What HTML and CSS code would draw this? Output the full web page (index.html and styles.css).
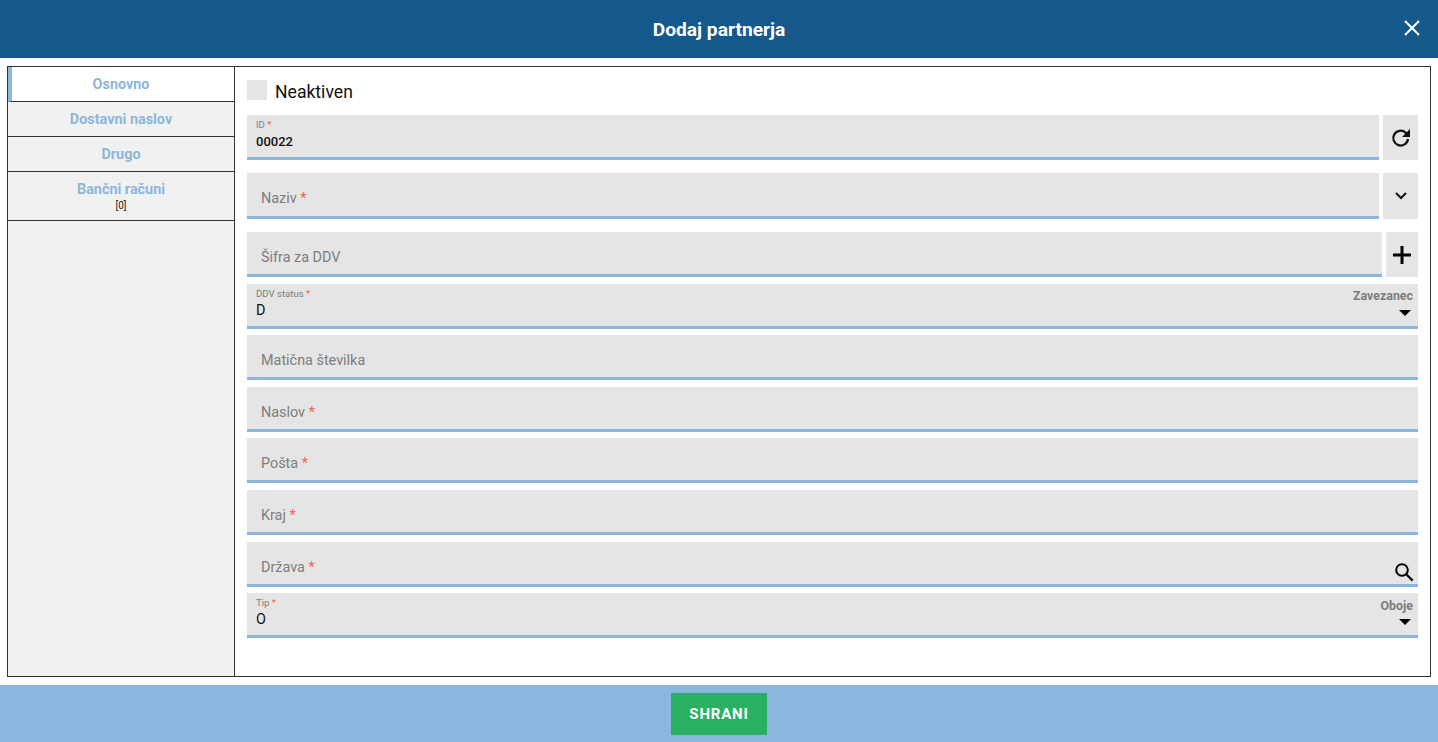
FILE: index.html
```html
<!DOCTYPE html>
<html lang="sl">
<head>
  <meta charset="UTF-8" />
  <title>Dodaj partnerja</title>
  <link rel="stylesheet" href="styles.css">
</head>
<body>
  <header class="glava">
    <h1>Dodaj partnerja</h1>
    <button class="zapri" aria-label="Zapri">
      <svg width="16" height="16" viewBox="0 0 16 16"><path d="M1 1L15 15M15 1L1 15" stroke="#fff" stroke-width="2" fill="none"/></svg>
    </button>
  </header>

  <main class="okvir">
    <nav class="zavihki">
      <a class="zavihek aktiven">Osnovno</a>
      <a class="zavihek">Dostavni naslov</a>
      <a class="zavihek">Drugo</a>
      <a class="zavihek zavihek-visok">Bančni računi<small>[0]</small></a>
    </nav>

    <form class="obrazec">
      <label class="potrditev"><span class="kvadrat"></span><span class="potrditev-tekst">Neaktiven</span></label>

      <div class="vrstica vrstica-id">
        <div class="polje polnjeno">
          <span class="oznaka">ID <i>*</i></span>
          <span class="vrednost krepko">00022</span>
        </div>
        <button type="button" class="gumb">
          <svg width="20" height="20" viewBox="0 0 20 20"><path d="M17 11A7.4 7.4 0 1 1 14.6 4.6L17 7" fill="none" stroke="#111" stroke-width="2.2"/><path d="M19 1V9H11Z" fill="#111"/></svg>
        </button>
      </div>

      <div class="vrstica vrstica-naziv">
        <div class="polje"><span class="naslov-polja">Naziv <i>*</i></span></div>
        <button type="button" class="gumb">
          <svg width="12" height="8" viewBox="0 0 12 8"><path d="M1 1L6 6L11 1" fill="none" stroke="#111" stroke-width="2"/></svg>
        </button>
      </div>

      <div class="vrstica vrstica-ddv">
        <div class="polje"><span class="naslov-polja">Šifra za DDV</span></div>
        <button type="button" class="gumb gumb-ozek">
          <svg width="18" height="18" viewBox="0 0 18 18"><path d="M9 0V18M0 9H18" stroke="#000" stroke-width="3"/></svg>
        </button>
      </div>

      <div class="polje polnjeno izbira">
        <span class="oznaka">DDV status <i>*</i></span>
        <span class="vrednost">D</span>
        <span class="opis">Zavezanec</span>
        <span class="puscica"></span>
      </div>

      <div class="polje"><span class="naslov-polja">Matična številka</span></div>
      <div class="polje"><span class="naslov-polja">Naslov <i>*</i></span></div>
      <div class="polje"><span class="naslov-polja">Pošta <i>*</i></span></div>
      <div class="polje"><span class="naslov-polja">Kraj <i>*</i></span></div>

      <div class="polje">
        <span class="naslov-polja">Država <i>*</i></span>
        <svg class="lupa" width="20" height="20" viewBox="0 0 20 20"><circle cx="8" cy="8" r="5.8" fill="none" stroke="#000" stroke-width="2"/><path d="M12.3 12.3L18.6 18.6" stroke="#000" stroke-width="2.2"/></svg>
      </div>

      <div class="polje polnjeno izbira">
        <span class="oznaka">Tip <i>*</i></span>
        <span class="vrednost">O</span>
        <span class="opis">Oboje</span>
        <span class="puscica"></span>
      </div>
    </form>
  </main>

  <footer class="noga">
    <button class="shrani">SHRANI</button>
  </footer>
</body>
</html>
```

FILE: styles.css
```css
* {
  box-sizing: border-box;
}

html, body {
  height: 100%;
}

body {
  margin: 0;
  background: #fff;
  font-family: Roboto, "Liberation Sans", sans-serif;
  display: flex;
  flex-direction: column;
  overflow: hidden;
}

.glava {
  height: 58px;
  background: #14588c;
  color: #fff;
  display: flex;
  align-items: center;
  justify-content: center;
  position: relative;
  flex-shrink: 0;
}

.glava h1 {
  margin: 0;
  font-size: 19.2px;
  font-weight: 700;
}

.zapri {
  position: absolute;
  top: 20px;
  right: 18px;
  width: 16px;
  height: 16px;
  padding: 0;
  border: none;
  background: none;
  display: flex;
}

.okvir {
  height: 611px;
  margin: 8px 7px 8px 7px;
  border: 1px solid #333;
  display: flex;
}

.zavihki {
  width: 227px;
  flex-shrink: 0;
  background: #f1f1f1;
  border-right: 1px solid #333;
}

.zavihek {
  height: 35px;
  display: flex;
  flex-direction: column;
  align-items: center;
  justify-content: center;
  padding: 1px 0 0 0;
  border-bottom: 1px solid #333;
  font-size: 14.4px;
  font-weight: 700;
  color: #8cb7dc;
}

.zavihek.aktiven {
  background: #fff;
  border-left: 4px solid #8cb7dc;
  padding-right: 4px;
}

.zavihek-visok {
  height: 49px;
  padding: 0;
}

.zavihek small {
  font-size: 10px;
  font-weight: 400;
  color: #222;
  margin-top: 2px;
}

.obrazec {
  flex: 1;
  padding: 13px 12px 0 12px;
  display: flex;
  flex-direction: column;
}

.potrditev {
  display: flex;
  align-items: center;
  gap: 8px;
  height: 20px;
  margin-bottom: 15px;
  font-size: 17.6px;
  color: #111;
}

.potrditev-tekst {
  padding-top: 3px;
}

.kvadrat {
  width: 20px;
  height: 20px;
  background: #e5e5e5;
}

.vrstica {
  display: flex;
  flex-shrink: 0;
}

.vrstica .polje {
  flex: 1;
  margin-bottom: 0;
}

.vrstica-id {
  gap: 4px;
  margin-bottom: 13px;
}

.vrstica-naziv {
  gap: 4px;
  margin-bottom: 13px;
}

.vrstica-ddv {
  gap: 4px;
  margin-bottom: 6.6px;
}

.polje {
  height: 45px;
  flex-shrink: 0;
  background: #e5e5e5;
  border-bottom: 3px solid #8cb7dc;
  margin-bottom: 6.6px;
  position: relative;
}

.vrstica-naziv .polje {
  height: 46px;
}

.gumb {
  width: 35px;
  padding: 0;
  border: none;
  background: #e5e5e5;
  display: flex;
  align-items: center;
  justify-content: center;
}

.gumb-ozek {
  width: 32px;
}

.naslov-polja {
  position: absolute;
  left: 14px;
  top: 17px;
  font-size: 14.4px;
  line-height: 18px;
  color: #7d7d7d;
}

.polje i {
  font-style: normal;
  color: #f0624d;
}

.oznaka {
  position: absolute;
  left: 9px;
  top: 4px;
  font-size: 9.6px;
  line-height: 11px;
  color: #7d7d7d;
}

.vrednost {
  position: absolute;
  left: 9px;
  top: 18px;
  font-size: 14.4px;
  line-height: 18px;
  color: #111;
}

.krepko {
  font-size: 13px;
  font-weight: 500;
}

.opis {
  position: absolute;
  right: 5px;
  top: 5.4px;
  font-size: 12.4px;
  line-height: 14px;
  font-weight: 700;
  color: #7d7d7d;
}

.puscica {
  position: absolute;
  right: 7px;
  top: 26px;
  width: 0;
  height: 0;
  border-left: 6px solid transparent;
  border-right: 6px solid transparent;
  border-top: 6px solid #000;
}

.lupa {
  position: absolute;
  right: 4px;
  bottom: 2px;
}

.noga {
  flex: 1;
  background: #8cb7dc;
  display: flex;
  justify-content: center;
  align-items: flex-start;
  padding-top: 8px;
}

.shrani {
  width: 96px;
  height: 42px;
  border: none;
  background: #2ab063;
  color: #fff;
  font-family: Roboto, "Liberation Sans", sans-serif;
  font-size: 15px;
  font-weight: 700;
  letter-spacing: 0.8px;
}
```
